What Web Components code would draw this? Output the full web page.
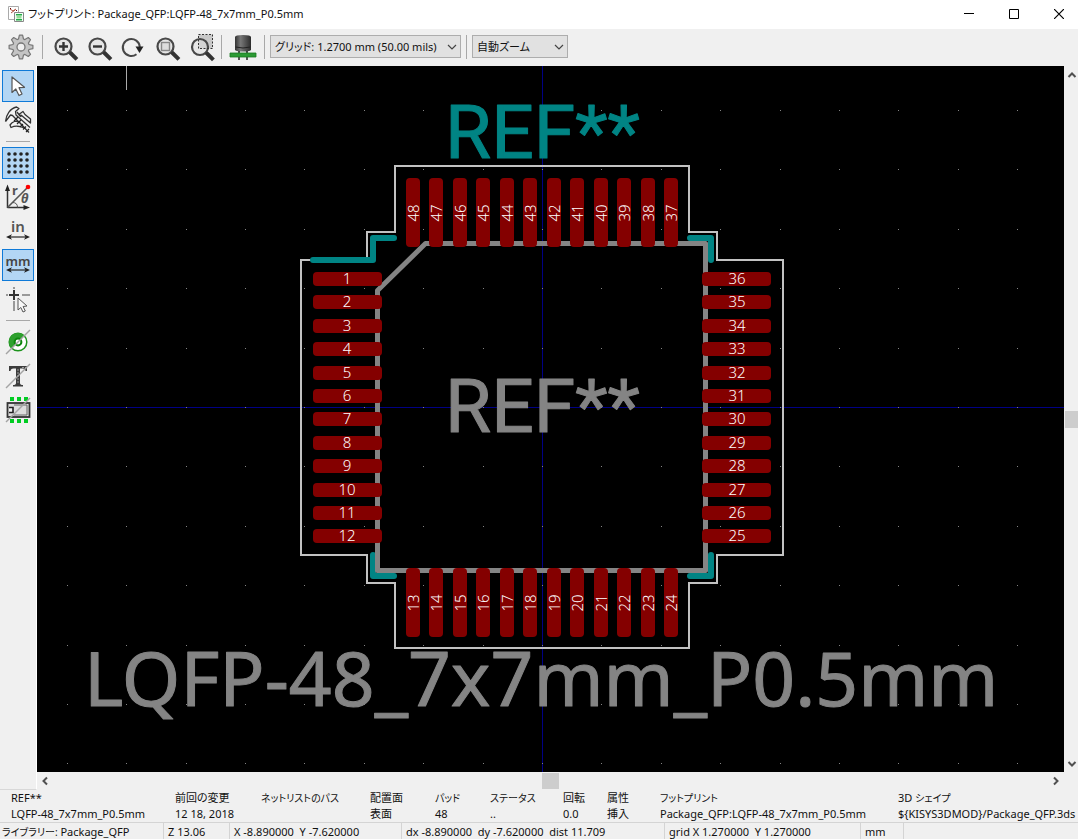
<!DOCTYPE html>
<html lang="ja">
<head>
<meta charset="utf-8">
<title>フットプリント: Package_QFP:LQFP-48_7x7mm_P0.5mm</title>
<style>
html,body{margin:0;height:100%}
body{font:11px/16px "Noto Sans","Noto Sans CJK JP",sans-serif;font-feature-settings:"palt";color:#111;background:#f0f0f0;overflow:hidden}
.kana{font-size:10px}
title-bar .kana{font-size:11px}
</style>
</head>
<body>
<footprint-viewer>
  <title-bar slot="title"><span class="kana">フットプリント:</span> Package_QFP:LQFP-48_7x7mm_P0.5mm</title-bar>
  <tool-bar slot="top">
    <tool-button icon="gear" label="設定"></tool-button>
    <tool-sep></tool-sep>
    <tool-button icon="zoomin" label="ズームイン"></tool-button>
    <tool-button icon="zoomout" label="ズームアウト"></tool-button>
    <tool-button icon="redraw" label="再描画"></tool-button>
    <tool-button icon="fit" label="全体表示"></tool-button>
    <tool-button icon="area" label="選択範囲をズーム"></tool-button>
    <tool-sep></tool-sep>
    <tool-button icon="chip3d" label="3Dビューアー"></tool-button>
    <tool-sep></tool-sep>
    <tool-select class="grid" label="グリッド" value="グリッド: 1.2700 mm (50.00 mils)"></tool-select>
    <tool-sep></tool-sep>
    <tool-select class="zoom" label="ズーム" value="自動ズーム"></tool-select>
  </tool-bar>
  <tool-bar slot="side" vertical>
    <tool-button icon="cursor" label="選択" active></tool-button>
    <tool-button icon="caliper" label="計測"></tool-button>
    <tool-sep vertical></tool-sep>
    <tool-button icon="dots" label="グリッド表示" active></tool-button>
    <tool-button icon="polar" label="極座標"></tool-button>
    <tool-button icon="inch" label="インチ"></tool-button>
    <tool-button icon="mm" label="ミリメートル" active></tool-button>
    <tool-button icon="cross" label="カーソル形状"></tool-button>
    <tool-sep vertical></tool-sep>
    <tool-button icon="pad" label="パッドのスケッチ表示"></tool-button>
    <tool-button icon="text" label="テキストのスケッチ表示"></tool-button>
    <tool-button icon="module" label="外形のスケッチ表示"></tool-button>
  </tool-bar>
  <footprint-canvas slot="canvas"></footprint-canvas>
  <message-panel slot="info">
    <message-item><span slot="label">REF**</span>LQFP-48_7x7mm_P0.5mm</message-item>
    <message-item><span slot="label">前回の変更</span>12 18, 2018</message-item>
    <message-item><span slot="label" class="kana">ネットリストのパス</span></message-item>
    <message-item><span slot="label">配置面</span>表面</message-item>
    <message-item><span slot="label" class="kana">パッド</span>48</message-item>
    <message-item><span slot="label" class="kana">ステータス</span>..</message-item>
    <message-item><span slot="label">回転</span>0.0</message-item>
    <message-item><span slot="label">属性</span>挿入</message-item>
    <message-item><span slot="label" class="kana">フットプリント</span>Package_QFP:LQFP-48_7x7mm_P0.5mm</message-item>
    <message-item><span slot="label">3D <span class="kana">シェイプ</span></span>${KISYS3DMOD}/Package_QFP.3ds</message-item>
  </message-panel>
  <status-bar slot="status">
    <span><span class="kana">ライブラリー:</span> Package_QFP</span>
    <span>Z 13.06</span>
    <span>X -8.890000&nbsp; Y -7.620000</span>
    <span>dx -8.890000&nbsp; dy -7.620000&nbsp; dist 11.709</span>
    <span>grid X 1.270000&nbsp; Y 1.270000</span>
    <span>mm</span>
    <span></span>
  </status-bar>
</footprint-viewer>
<script>
const define=(name,html)=>customElements.define(name,class extends HTMLElement{
  constructor(){super();this.attachShadow({mode:'open'})}
  connectedCallback(){this.shadowRoot.innerHTML=typeof html==='function'?html(this):html}
});

const lens=(x,y)=>`<circle cx="${x}" cy="${y}" r="8" fill="#e6e6e6" stroke="#484848" stroke-width="2.2"/><path d="M${x+6} ${y+6}l2 2" stroke="#484848" stroke-width="2"/><path d="M${x+7.5} ${y+7}l4.5 4.5" stroke="#333" stroke-width="4" stroke-linecap="square"/>`;
const gear=()=>{
  let p='';
  for(let i=0;i<8;i++){
    const a=i*Math.PI/4;
    [[-.3,8.4],[-.13,12],[.13,12],[.3,8.4]].forEach(([d,r])=>{
      p+=`${(16+r*Math.sin(a+d)).toFixed(1)},${(16-r*Math.cos(a+d)).toFixed(1)} `;
    });
  }
  return `<polygon points="${p}" fill="#c4c4c4" stroke="#777" stroke-width="1.2" stroke-linejoin="round"/><circle cx="16" cy="16" r="4" fill="#f0f0f0" stroke="#777" stroke-width="1.3"/>`;
};
const dots=()=>{
  let s='';
  for(let y=0;y<4;y++)for(let x=0;x<4;x++)s+=`<circle cx="${7+x*6}" cy="${7+y*6}" r="1.8"/>`;
  return `<g fill="#222">${s}</g>`;
};
const span=y=>`<path d="M7 ${y}H25" stroke="#333" stroke-width="1.3"/><path d="M4 ${y}l6-2.7-1.6 2.7 1.6 2.7zM28 ${y}l-6-2.7 1.6 2.7-1.6 2.7z" fill="#222"/>`;
const slash='<path d="M4 28L28 4" stroke="#a4a4a4" stroke-width="1.5"/>';
const ICONS={
  gear:gear(),
  zoomin:lens(15.5,15.5)+'<path d="M11 15.5h9M15.5 11v9" stroke="#333" stroke-width="2.4"/>',
  zoomout:lens(15.5,15.5)+'<path d="M11 15.5h9" stroke="#333" stroke-width="2.4"/>',
  redraw:'<path d="M20.5 23.2A8.5 8.5 0 1 1 23.8 16" fill="none" stroke="#484848" stroke-width="2"/><path d="M19.500 15.500h8l-4 6.500z" fill="#222"/>',
  fit:lens(15.5,15.5)+'<rect x="11.500" y="11.500" width="8" height="8" fill="#ddd" stroke="#888" stroke-width="1.4"/>',
  area:'<rect x="14.5" y="3.5" width="14" height="14" fill="#c8c8c8"/>'+lens(16,16).replace('fill="#e6e6e6"','fill="#ddd" fill-opacity=".5"')+'<rect x="14.5" y="3.5" width="14" height="14" fill="none" stroke="#333" stroke-dasharray="2 1.5"/>',
  chip3d:'<defs><linearGradient id="g"><stop offset="0" stop-color="#333"/><stop offset=".35" stop-color="#777"/><stop offset="1" stop-color="#2c2c2c"/></linearGradient></defs><path d="M8 18.500V6q0-2 8-2t8 2v12.500q0 2-8 2t-8-2z" fill="url(#g)"/><path d="M8.500 16q7.500 2 15 0" fill="none" stroke="#222"/><path d="M12 20v2M20 20v2M12 26v3M20 26v3" stroke="#222" stroke-width="1.500"/><path d="M3 22h26v4H3z" fill="#2c9a34" stroke="#187a20" stroke-width=".8"/>',
  cursor:'<path d="M10 7v15.500l3.800-3.500 3.200 6.500 3-1.500-3-6.300 5.500-.4z" fill="#fff" stroke="#555" stroke-width="1.2" stroke-linejoin="round"/>',
  caliper:'<g fill="none" stroke="#333" stroke-width="1.300" stroke-linejoin="round"><path d="M3.500 17.500C4 11 8 4.500 14.500 3l2.500 1.500-3.500 3 .5 3.500L28 23.500M3.500 17.500L8.500 11l2 .5L27 28.500" fill="#f4f4f4"/><path d="M8 21c2.500-3.500 6-5 9.500-2.500l5 5.500-5-1.500c-3-.8-5.500-.5-8.500 1z" fill="#f4f4f4"/><path d="M15 8l3 4M19 13l-1.500-3L21 7.500l2 3L28.500 15v4L19 11"/></g><path d="M12 17l4-4M15 20l4-4M18 23l3-3M21 25.500l3-3M24 28l3-3" stroke="#222" stroke-width="1.200"/>',
  dots:dots(),
  polar:'<path d="M5.500 27V7M5.500 26.500H24" stroke="#333" stroke-width="1.5"/><path d="M5.500 3.500L8 10H3zM28 26.500L21.500 29v-5z" fill="#222"/><path d="M5.500 26.500L25 7" stroke="#555" stroke-width="1.6"/><path d="M10.500 21.500q5 0 5 5" fill="none" stroke="#555"/><circle cx="26" cy="6" r="2.300" fill="#f00"/><text x="10" y="14" font-size="13" font-weight="700" fill="#555">r</text><text x="19" y="22" font-size="13" font-weight="700" font-style="italic" fill="#555">θ</text>',
  inch:'<text x="16" y="17" font-size="15" font-weight="600" text-anchor="middle" fill="#555">in</text>'+span(22),
  mm:'<text x="16" y="17" font-size="13" font-weight="600" text-anchor="middle" fill="#444">mm</text>'+span(21),
  cross:'<path d="M4 12h2M20 12h8M12 4v2M12 18v10" stroke="#999" stroke-width="2"/><path d="M7 12h10M12 7v10" stroke="#333" stroke-width="2"/><path d="M16 15v12l2.800-2.500 2.200 4.500 2.300-1-2.200-4.500 3.900-.5z" fill="#f8f8f8" stroke="#555"/>',
  pad:'<circle cx="16" cy="16" r="8.800" fill="#fff" stroke="#1c931c" stroke-width="1.500"/><path d="M16 7a9 9 0 0 0-6.300 15.300L22.300 9.700A9 9 0 0 0 16 7z" fill="#2ea02e"/><circle cx="16" cy="16" r="3.400" fill="#fff" stroke="#0b860b" stroke-width="2"/>'+slash,
  text:'<path d="M7 6h18v5h-1.500q0-2.500-3-2.500h-2.500V23q0 2 3 2v1.500H11V25q3 0 3-2V8.500h-2.500Q8.500 8.500 8.500 11H7z" fill="#3c3c3c"/><path d="M20 7.500h4M16 9v14" stroke="#999" stroke-dasharray="2 1"/>'+slash,
  module:'<path d="M8 3h4v4H8zM15 3h4v4h-4zM22 3h4v4h-4zM8 25h4v4H8zM15 25h4v4h-4zM22 25h4v4h-4z" fill="#0c2"/><rect x="5.500" y="9" width="22" height="14" fill="#ddd" stroke="#333" stroke-width="1.800"/><path d="M7 13.500h4v5H7" fill="#f4f4f4" stroke="#222" stroke-width="1.600"/><path d="M12 11h13v10H12" fill="none" stroke="#666"/>'+slash
};

define('footprint-viewer',`<style>
:host{display:flex;flex-direction:column;height:100vh;background:#f0f0f0}
.main{flex:1;display:flex;min-height:0}
.side{flex:none;width:36px;border-right:1px solid #fff;border-bottom:1px solid #d8d8d8}
.work{flex:1;display:grid;grid-template:minmax(0,1fr) 18px / minmax(0,1fr) 14px;min-width:0}
</style>
<slot name="title"></slot><slot name="top"></slot>
<div class="main"><div class="side"><slot name="side"></slot></div>
<div class="work"><slot name="canvas"></slot><scroll-bar vertical></scroll-bar><scroll-bar></scroll-bar></div></div>
<slot name="info"></slot><slot name="status"></slot>`);

define('title-bar',`<style>
:host{display:flex;align-items:center;height:29px;padding:0 14px 2px 8px;box-sizing:border-box;background:#fff;white-space:nowrap}
.t{flex:1;margin-left:4px}
.c{display:flex;gap:35px}
button{all:unset;width:10px;height:16px;display:flex;align-items:center}
svg{display:block;flex:none}
</style>
<svg width="16" height="16" viewBox="0 0 16 16"><path d="M.5.5h10v13H.5z" fill="#fff" stroke="#aaa"/><path d="M2 3l3 2 3-2M3 7l4-3" stroke="#b05040" fill="none"/><path d="M2 2h1v1H2zM8 4h1v1H8z" fill="#600"/><path d="M6.500 6.500h9v9h-9z" fill="#f4fff4" stroke="#888"/><path d="M8 8h6v1.500H8zM8 13h6v1.500H8z" fill="#2a4" /><path d="M8.500 10h5v2.500h-5z" fill="#9d9"/></svg>
<div class="t"><slot></slot></div>
<div class="c">
<button aria-label="最小化"><svg width="10" height="10"><path d="M0 4.500h10" stroke="#000"/></svg></button>
<button aria-label="最大化"><svg width="10" height="10"><path d="M.5.5h9v9h-9z" fill="none" stroke="#000"/></svg></button>
<button aria-label="閉じる"><svg width="10" height="10"><path d="M0 0l10 10M10 0L0 10" stroke="#000" stroke-width="1.200"/></svg></button>
</div>`);

define('tool-bar',`<style>
:host{display:flex;align-items:center;gap:2px;height:37px;box-sizing:border-box;padding:2px 5px 3px}
:host([vertical]){flex-direction:column;height:auto;padding:4px 2px}
</style><slot></slot>`);

define('tool-sep',`<style>
:host{display:flex;justify-content:center;width:7px;height:24px}
:host::before{content:"";width:1px;background:#a8a8a8}
:host([vertical]){align-items:center;width:24px;height:7px}
:host([vertical])::before{width:24px;height:1px}
</style>`);

define('tool-button',el=>`<style>
:host{display:block;flex:none}
button{display:block;width:32px;height:32px;padding:0;border:0;background:none}
:host([active]) button{background:#b3d6f4;box-shadow:inset 0 0 0 1px #0f7ad8}
svg{display:block;font-family:"Noto Sans",sans-serif}
</style><button aria-label="${el.getAttribute('label')}"><svg width="32" height="32" viewBox="0 0 32 32">${ICONS[el.getAttribute('icon')]}</svg></button>`);

define('tool-select',el=>`<style>
:host{display:grid;flex:none;height:24px;width:96px}
:host(.grid){width:191px}
select,svg{grid-area:1/1}
select{appearance:none;width:100%;height:23px;border:1px solid #adadad;border-radius:0;background:#e1e1e1;padding:0 20px 0 4px;margin:0;font:inherit;font-feature-settings:inherit;color:#111}
svg{justify-self:end;align-self:center;margin-right:4px;pointer-events:none}
</style><select aria-label="${el.getAttribute('label')}"><option>${el.getAttribute('value')}</option></select>
<svg width="10" height="6"><path d="M1 1l4 4 4-4" fill="none" stroke="#444" stroke-width="1.200"/></svg>`);

define('scroll-bar',`<style>
:host{display:flex;align-items:center;justify-content:space-between;padding:0 4px;background:#f0f0f0}
:host([vertical]){flex-direction:column;padding:5px 0 4px 1px}
.thumb{width:17px;height:16px;background:#cdcdcd}
:host([vertical]) .thumb{width:13px;height:17px}
.h{display:block}.v{display:none}
:host([vertical]) .h{display:none}:host([vertical]) .v{display:block}
path{fill:none;stroke:#505050;stroke-width:2}
</style>
<svg class="h" width="8" height="10"><path d="M6 1.500L2.500 5 6 8.500"/></svg><svg class="v" width="10" height="8"><path d="M1.500 6L5 2.500 8.500 6"/></svg>
<div class="thumb"></div>
<svg class="h" width="8" height="10"><path d="M2 1.500L5.500 5 2 8.500"/></svg><svg class="v" width="10" height="8"><path d="M1.500 2L5 5.500 8.500 2"/></svg>`);

define('message-panel',`<style>
:host{display:grid;grid-template-columns:164px 86px 109px 65px 55px 73px 44px 53px 238px minmax(0,1fr);height:32px;padding-left:11px;overflow:hidden;white-space:nowrap}
</style><slot></slot>`);
define('message-item',`<style>
:host{display:block;line-height:16px}
div{height:16px}
div+div{line-height:15px;height:15px}
</style><div><slot name="label"></slot></div><div><slot></slot></div>`);
define('status-bar',`<style>
:host{display:grid;grid-template-columns:164px 66px 172px 263px 196px 43px 1fr;height:17px;box-sizing:border-box;border-top:1px solid #d4d4d4;white-space:nowrap;overflow:hidden}
::slotted(span){padding:1px 4px 0;line-height:15px;border-right:1px solid #d4d4d4}
::slotted(span:first-child){padding-left:2px}
::slotted(span:last-child){border:0}
</style><slot></slot>`);

/* Board drawing: origin at (542,407), 59.4 units per grid step, 23.4 per pad pitch. */
define('footprint-canvas',()=>{
  const rect=(x,y,w,h,r=0)=>`<rect x="${x}" y="${y}" width="${w}" height="${h}" rx="${r}"/>`;
  let grid='',pads='',nums='';
  for(let i=-8;i<=8;i++)for(let j=-5;j<=6;j++)grid+=rect(Math.round(542+i*59.4),Math.round(407+j*59.4),1,1);
  for(let i=0;i<12;i++){
    const y=Math.round(279+i*23.4),x=Math.round(413+i*23.45);
    pads+=rect(313,y-7,69,14,4)+rect(702,y-7,69,14,4)+rect(x-7,178,14,69,4)+rect(x-7,568,14,69,4);
    nums+=`<text x="347" y="${y+5}">${i+1}</text><text x="737" y="${y+5}">${36-i}</text>`+
      `<text transform="translate(${x+6} 213) rotate(-90)">${48-i}</text><text transform="translate(${x+6} 603) rotate(-90)">${13+i}</text>`;
  }
  return `<style>
:host{display:block;background:#000;overflow:hidden;min-height:0}
svg{display:block;width:100%;height:100%}
.line{fill:none}
.num{font:300 15px "Noto Sans",sans-serif;fill:#fff;text-anchor:middle}
.ref,.val{stroke-width:1;stroke-linejoin:round}
.ref{font:75px Roboto,sans-serif}
.val{font:75px "Noto Sans",sans-serif}
.teal{fill:#008484;stroke:#008484}
.gray{fill:#848484;stroke:#848484}
</style>
<svg viewBox="37 66 1027 706" role="img" aria-label="LQFP-48_7x7mm_P0.5mm">
<g fill="#000084">${rect(542,66,1,706)}${rect(37,407,1027,1)}</g>
<g fill="#848484">${grid}</g>
<rect x="126" y="66" width="1" height="24" fill="#aaa"/>
<path class="line" stroke="#c2c2c2" stroke-width="2" d="M395 166H689V232H717V260H783V555H717V583H689V648H395V583H367V555H301V260H367V232H395z"/>
<path class="line" stroke="#008484" stroke-width="6" stroke-linecap="round" stroke-linejoin="round" d="M313 260H373V238H394M690 238H711V260M711 555V576H690M373 555V576H394"/>
<path class="line" stroke="#848484" stroke-width="5" stroke-linejoin="round" d="M425.500 243.500H705.500V570.500H377.500V290.500z"/>
<g fill="#840000">${pads}</g>
<g class="num">${nums}</g>
<text class="ref teal" x="445" y="158">REF**</text>
<text class="ref gray" x="445" y="432">REF**</text>
<text class="val gray" x="84" y="706">LQFP-48_7x7mm_P0.5mm</text>
</svg>`;
});
</script>
</body>
</html>
